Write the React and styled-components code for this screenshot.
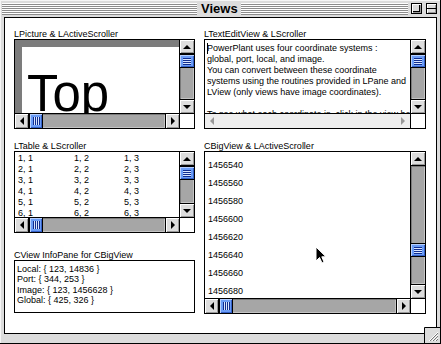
import React from 'react'
import styled, { createGlobalStyle } from 'styled-components'

const GlobalStyle = createGlobalStyle`
  html, body { margin: 0; padding: 0; background: #fff; overflow: hidden; }
  body { font-family: "Liberation Sans", Arial, sans-serif; }
`

const Window = styled.div`
  position: relative;
  width: 441px;
  height: 344px;
  box-sizing: border-box;
  background: #dcdcdc;
  border-right: 1px solid #000;
  border-bottom: 1px solid #000;
  box-shadow: inset 1px 1px 0 #f6f6f6;
  display: flex;
  flex-direction: column;
`

const TitleBar = styled.div`
  height: 17px;
  flex: none;
  display: grid;
  grid-template-columns: 195px auto 1fr;
  align-items: center;
  padding: 0 3px 0 2px;
`

const Stripes = styled.div`
  height: 12px;
  flex: 1;
  background: repeating-linear-gradient(to bottom, #fff 0 1px, #8c8c8c 1px 2px);
`

const Title = styled.div`
  font: bold 13px "Liberation Sans", Arial, sans-serif;
  padding: 0 3px 0 4px;
  line-height: 17px;
  color: #000;
`

const RightTitle = styled.div`
  display: flex;
  align-items: center;
  gap: 3px;
`

const TitleButton = styled.div`
  width: 11px;
  height: 11px;
  flex: none;
  box-sizing: border-box;
  border: 1px solid #000;
  background: #dcdcdc;
  box-shadow: inset 1px 1px 0 #fff, inset -1px -1px 0 #999;
  margin-left: ${p => p.$gap}px;
  display: flex;
  align-items: ${p => (p.$kind === 'zoom' ? 'flex-start' : 'center')};
`

const ZoomInner = styled.div`
  width: 6px;
  height: 6px;
  margin: 1px;
  border: 1px solid #000;
  border-top: none;
  border-left: none;
`

const ShadeInner = styled.div`
  width: 100%;
  height: 1px;
  background: #000;
`

const Body = styled.div`
  flex: 1;
  display: flex;
  padding: 0 3px 9px 4px;
  min-height: 0;
`

const Content = styled.div`
  flex: 1;
  background: #fff;
  border: 1px solid #000;
  padding: 11px 9px 0 9px;
  display: flex;
  gap: 9px;
`

const Column = styled.div`
  width: ${p => p.$w}px;
  display: flex;
  flex-direction: column;
`

const Label = styled.div`
  font-size: 9px;
  line-height: 10px;
  height: 10px;
  color: #000;
  white-space: nowrap;
  margin-top: ${p => p.$mt || 0}px;
`

const Frame = styled.div`
  height: ${p => p.$h}px;
  box-sizing: border-box;
  border: 1px solid #000;
  display: grid;
  grid-template-columns: 1fr ${p => (p.$noV ? '' : '15px')};
  grid-template-rows: 1fr ${p => (p.$noH ? '' : '15px')};
  overflow: hidden;
  background: #fff;
`

const VBar = styled.div`
  display: flex;
  flex-direction: column;
  border-left: 1px solid #000;
  background: ${p => (p.$inactive ? '#eeeeee' : '#a6a6a6')};
  min-height: 0;
`

const HBar = styled.div`
  display: flex;
  border-top: 1px solid #000;
  background: ${p => (p.$inactive ? '#eeeeee' : '#a6a6a6')};
  min-width: 0;
`

const ArrowBtn = styled.div`
  flex: none;
  box-sizing: border-box;
  width: ${p => (p.$h ? '14px' : 'auto')};
  height: ${p => (p.$h ? 'auto' : '14px')};
  background: ${p => (p.$inactive ? '#eeeeee' : '#dddddd')};
  box-shadow: ${p => (p.$inactive ? 'none' : 'inset 1px 1px 0 #fff, inset -1px -1px 0 #999')};
  display: flex;
  align-items: center;
  justify-content: center;
  ${p => p.$side === 'top' && 'border-bottom: 1px solid #000;'}
  ${p => p.$side === 'bottom' && 'border-top: 1px solid #000;'}
  ${p => p.$side === 'left' && 'border-right: 1px solid #000;'}
  ${p => p.$side === 'right' && 'border-left: 1px solid #000;'}
  ${p => p.$inactive && 'border: none;'}
`

const Tri = styled.div`
  width: 0;
  height: 0;
  ${p => {
    const c = p.$inactive ? '#999' : '#000'
    if (p.$dir === 'up') return `border-left: 4px solid transparent; border-right: 4px solid transparent; border-bottom: 4px solid ${c};`
    if (p.$dir === 'down') return `border-left: 4px solid transparent; border-right: 4px solid transparent; border-top: 4px solid ${c};`
    if (p.$dir === 'left') return `border-top: 4px solid transparent; border-bottom: 4px solid transparent; border-right: 4px solid ${c};`
    return `border-top: 4px solid transparent; border-bottom: 4px solid transparent; border-left: 4px solid ${c};`
  }}
`

const Track = styled.div`
  flex: 1;
  min-height: 0;
  min-width: 0;
  box-shadow: ${p => (p.$inactive ? 'none' : 'inset 1px 1px 0 #7a7a7a, inset -1px -1px 0 #c4c4c4')};
  padding-top: ${p => (p.$h ? 0 : p.$offset)}px;
  padding-left: ${p => (p.$h ? p.$offset : 0)}px;
  display: flex;
  flex-direction: ${p => (p.$h ? 'row' : 'column')};
`

const Thumb = styled.div`
  flex: none;
  box-sizing: border-box;
  width: ${p => (p.$h ? '14px' : 'auto')};
  height: ${p => (p.$h ? 'auto' : '14px')};
  background: #6a9cf6;
  box-shadow: inset 1px 1px 0 #b8d0ff, inset -1px -1px 0 #3460c8;
  ${p => (p.$h
    ? 'border-left: 1px solid #000; border-right: 1px solid #000;'
    : 'border-top: 1px solid #000; border-bottom: 1px solid #000;')}
  display: flex;
  align-items: center;
  justify-content: center;
`

const Grip = styled.div`
  width: ${p => (p.$h ? '7px' : '8px')};
  height: ${p => (p.$h ? '8px' : '7px')};
  background: ${p => (p.$h
    ? 'repeating-linear-gradient(to right, #102c90 0 1px, #d8e6ff 1px 2px)'
    : 'repeating-linear-gradient(to bottom, #102c90 0 1px, #d8e6ff 1px 2px)')};
`

const Corner = styled.div`
  border-left: 1px solid #000;
  border-top: 1px solid #000;
  background: #fff;
`

const VScroll = ({ offset = 0, inactive }) => (
  <VBar $inactive={inactive}>
    <ArrowBtn $side="top" $inactive={inactive}><Tri $dir="up" $inactive={inactive} /></ArrowBtn>
    <Track $offset={offset} $inactive={inactive}>
      {!inactive && <Thumb><Grip /></Thumb>}
    </Track>
    <ArrowBtn $side="bottom" $inactive={inactive}><Tri $dir="down" $inactive={inactive} /></ArrowBtn>
  </VBar>
)

const HScroll = ({ offset = 0, inactive }) => (
  <HBar $inactive={inactive}>
    <ArrowBtn $h $side="left" $inactive={inactive}><Tri $dir="left" $inactive={inactive} /></ArrowBtn>
    <Track $h $offset={offset} $inactive={inactive}>
      {!inactive && <Thumb $h><Grip $h /></Thumb>}
    </Track>
    <ArrowBtn $h $side="right" $inactive={inactive}><Tri $dir="right" $inactive={inactive} /></ArrowBtn>
  </HBar>
)

const Pane = styled.div`
  position: relative;
  overflow: hidden;
  min-width: 0;
  min-height: 0;
  font-size: 9px;
  color: #000;
`

const PictureCanvas = styled(Pane)`
  border-top: 7px solid #7c7c7c;
  border-left: 7px solid #7c7c7c;
  padding: 21px 0 0 5px;
  font: 51px/51px "Liberation Sans", Arial, sans-serif;
`

const TextPane = styled(Pane)`
  padding: 3px 0 0 2px;
  line-height: 11px;
  white-space: nowrap;
`

const Caret = styled.span`
  display: inline-block;
  width: 1px;
  height: 11px;
  background: #000;
  vertical-align: top;
  margin-right: -1px;
`

const TableGrid = styled(Pane)`
  display: grid;
  grid-template-columns: 56px 50px 50px;
  grid-auto-rows: 11px;
  padding: 1px 0 0 3px;
  line-height: 11px;
`

const InfoPane = styled(Pane)`
  padding: 3px 0 0 2px;
  line-height: 10.4px;
`

const BigPane = styled(Pane)`
  padding-top: 4px;
`

const BigRow = styled.div`
  height: 18px;
  line-height: 18px;
  padding-left: 3px;
`

const Cursor = styled.svg`
  position: absolute;
  left: 110px;
  top: 94px;
`

const Grow = styled.svg`
  position: absolute;
  right: 0;
  bottom: 0;
`

const textLines = [
  'PowerPlant uses four coordinate systems :',
  'global, port, local, and image.',
  'You can convert between these coordinate',
  'systems using the routines provided in LPane and',
  'LView (only views have image coordinates).',
  '\u00a0',
  'To see what each coordinate is, click in the view below.',
]

const bigRows = [1456540, 1456560, 1456580, 1456600, 1456620, 1456640, 1456660, 1456680]

const info = [
  'Local: { 123, 14836 }',
  'Port: { 344, 253 }',
  'Image: { 123, 1456628 }',
  'Global: { 425, 326 }',
]

export default function App() {
  return (
    <>
      <GlobalStyle />
      <Window>
        <TitleBar>
          <Stripes />
          <Title>Views</Title>
          <RightTitle>
            <Stripes />
            <TitleButton $kind="zoom" $gap={0}><ZoomInner /></TitleButton>
            <TitleButton $kind="shade" $gap={1}><ShadeInner /></TitleButton>
          </RightTitle>
        </TitleBar>
        <Body>
          <Content>
            <Column $w={181}>
              <Label>LPicture &amp; LActiveScroller</Label>
              <Frame $h={90}>
                <PictureCanvas>Top</PictureCanvas>
                <VScroll offset={0} />
                <HScroll offset={0} />
                <Corner />
              </Frame>

              <Label $mt={12}>LTable &amp; LScroller</Label>
              <Frame $h={82}>
                <TableGrid>
                  {[1, 2, 3, 4, 5, 6, 7].map(r =>
                    [1, 2, 3].map(c => <div key={`${r}-${c}`}>{r}, {c}</div>)
                  )}
                </TableGrid>
                <VScroll offset={0} />
                <HScroll offset={0} />
                <Corner />
              </Frame>

              <Label $mt={17}>CView InfoPane for CBigView</Label>
              <Frame $h={53} $noV $noH>
                <InfoPane>
                  {info.map(t => <div key={t}>{t}</div>)}
                </InfoPane>
              </Frame>
            </Column>

            <Column $w={222}>
              <Label>LTextEditView &amp; LScroller</Label>
              <Frame $h={90}>
                <TextPane>
                  {textLines.map((t, i) => (
                    <div key={i}>{i === 0 && <Caret />}{t}</div>
                  ))}
                </TextPane>
                <VScroll offset={0} />
                <HScroll inactive />
                <Corner />
              </Frame>

              <Label $mt={12}>CBigView &amp; LActiveScroller</Label>
              <Frame $h={163}>
                <BigPane>
                  {bigRows.map(n => <BigRow key={n}>{n}</BigRow>)}
                  <Cursor width="12" height="18" viewBox="0 0 12 18">
                    <path d="M1 1 L1 15 L4.5 11.5 L7 17 L9 16 L6.8 10.8 L11 10.8 Z" fill="#000" stroke="#fff" strokeWidth="1" />
                  </Cursor>
                </BigPane>
                <VScroll offset={77} />
                <HScroll offset={0} />
                <Corner />
              </Frame>
            </Column>
          </Content>
        </Body>
        <Grow width="16" height="16" viewBox="0 0 16 16">
          <rect x="0.5" y="0.5" width="15" height="15" fill="#dcdcdc" stroke="none" />
          <path d="M0.5 16 V0.5 H16" fill="none" stroke="#000" />
          <path d="M5 14 L14 5 M8 14 L14 8 M11 14 L14 11" stroke="#fff" strokeWidth="1" />
          <path d="M6 14 L14 6 M9 14 L14 9 M12 14 L14 12" stroke="#777" strokeWidth="1" />
        </Grow>
      </Window>
    </>
  )
}
